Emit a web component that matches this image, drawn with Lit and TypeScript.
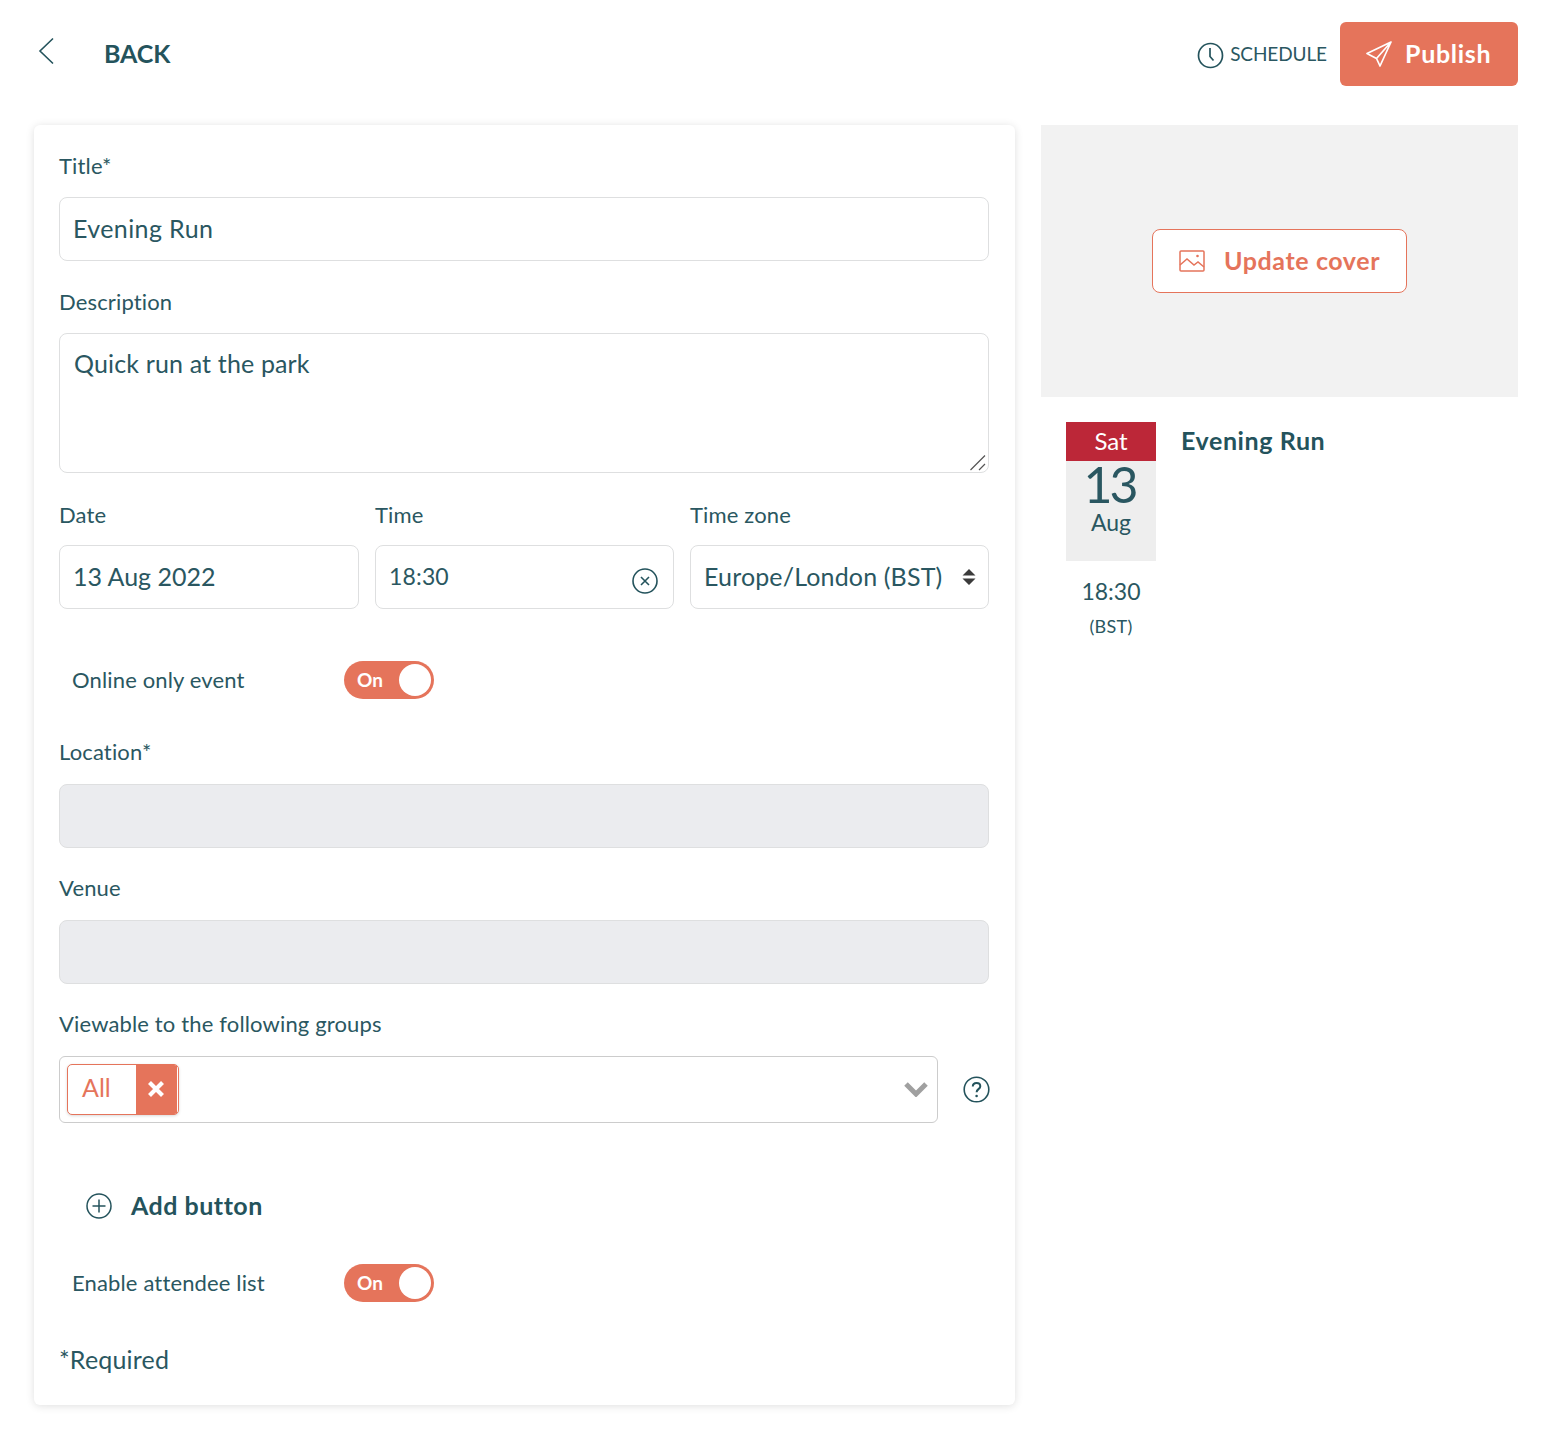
import { LitElement, html, css } from 'lit';
import { customElement } from 'lit/decorators.js';

@customElement('app-root')
export class AppRoot extends LitElement {
  static styles = css`
    :host {
      display: block;
      font-family: 'Lato', 'Open Sans', sans-serif;
      color: #2a5761;
      background: #fff;
      height: 1448px;
      box-sizing: border-box;
      padding: 22px 30px 0 34px;
    }
    * { box-sizing: border-box; }
    svg { display: block; flex: none; }

    .header {
      display: flex;
      align-items: center;
      height: 64px;
      margin-bottom: 39px;
    }
    .back-icon { margin-left: 4px; margin-top: -7px; }
    .back {
      margin-left: 50px;
      padding-bottom: 2px;
      font-size: 25px;
      font-weight: 700;
      color: #24535c;
      letter-spacing: -0.1px;
    }
    .spacer { flex: 1; }
    .schedule {
      display: flex;
      align-items: center;
      gap: 6px;
      font-size: 19px;
      letter-spacing: -0.1px;
      margin-right: 13px;
    }
    .schedule svg { margin-top: 2px; }
    .schedule span, .publish span { padding-bottom: 2px; }
    .publish {
      display: flex;
      align-items: center;
      gap: 13px;
      width: 178px;
      height: 64px;
      padding-left: 26px;
      background: #e5745b;
      color: #fff;
      border-radius: 6px;
      font-size: 25px;
      font-weight: 700;
      letter-spacing: 0.7px;
    }

    .columns { display: flex; gap: 26px; align-items: flex-start; }

    .card {
      width: 981px;
      height: 1280px;
      padding: 26px 26px 0 25px;
      border-radius: 6px;
      box-shadow: 0 1px 8px rgba(0, 0, 0, 0.13);
      background: #fff;
    }
    label {
      display: block;
      font-size: 22px;
      line-height: 30px;
      letter-spacing: 0.15px;
      margin-bottom: 16px;
    }
    input, textarea, .field {
      display: block;
      width: 100%;
      font: inherit;
      color: inherit;
      font-size: 25px;
      letter-spacing: 0.15px;
      border: 1px solid #dedfe0;
      border-radius: 8px;
      background: #fff;
      outline: none;
      padding: 0 13px;
    }
    input, .field { height: 64px; padding-bottom: 2px; }
    .title-input { letter-spacing: 0.4px; }
    .date-input { letter-spacing: 0; }
    .area { position: relative; height: 140px; }
    textarea {
      height: 140px;
      padding: 14px 14px;
      line-height: 30px;
      resize: none;
    }
    .grip { position: absolute; right: 3px; bottom: 2px; }
    input[disabled] { background: #ebecef; padding: 0; }
    .group { margin-bottom: 26px; }
    .group.tall { margin-bottom: 27px; }
    .lower label { line-height: 28px; margin-bottom: 18px; }

    .row {
      display: grid;
      grid-template-columns: 300px 299px 299px;
      gap: 16px;
      margin-bottom: 52px;
    }
    .row label { line-height: 29px; margin-bottom: 16px; }
    .field { display: flex; align-items: center; justify-content: space-between; }
    .tz { padding-right: 12px; }
    .tz svg { margin-top: 2px; }
    .time { padding-right: 15px; }
    .time svg { margin-top: 10px; }
    .digits { font-size: 23px; }

    .toggle-row {
      display: flex;
      align-items: center;
      height: 38px;
      padding-left: 13px;
      font-size: 22px;
      letter-spacing: 0.15px;
    }
    .toggle-row span.text { width: 272px; padding-bottom: 1px; }
    .online { margin-bottom: 39px; }
    .toggle {
      position: relative;
      width: 90px;
      height: 38px;
      border-radius: 19px;
      background: #e5745b;
      color: #fff;
      font-size: 19px;
      font-weight: 700;
      line-height: 38px;
      padding-left: 13px;
    }
    .knob {
      position: absolute;
      top: 3px;
      right: 3px;
      width: 32px;
      height: 32px;
      border-radius: 50%;
      background: #fff;
    }

    .groups { display: flex; align-items: center; justify-content: space-between; margin-right: -1px; }
    .multi {
      display: flex;
      align-items: center;
      justify-content: space-between;
      width: 879px;
      height: 67px;
      padding: 0 9px 0 7px;
      border: 1px solid #cccccc;
      border-radius: 6px;
    }
    .multi > svg { margin-top: -2px; }
    .tag {
      display: flex;
      width: 112px;
      height: 51px;
      margin-top: -1px;
      padding-right: 1px;
      background: #fff;
      border: 1px solid #e5745b;
      border-radius: 5px;
      overflow: hidden;
      box-shadow: 0 1px 3px rgba(0, 0, 0, 0.15);
    }
    .tag span {
      flex: 1;
      padding-left: 14px;
      font-size: 25px;
      line-height: 44px;
      color: #e5745b;
    }
    .tag div {
      display: flex;
      align-items: center;
      justify-content: center;
      width: 41px;
      padding: 0 1px 1px 0;
      background: #e5745b;
    }
    .multi-wrap { margin-bottom: 64px; }

    .add {
      display: flex;
      align-items: center;
      gap: 18px;
      height: 38px;
      padding-left: 27px;
      margin-bottom: 39px;
      font-size: 25px;
      font-weight: 700;
      color: #24535c;
      letter-spacing: 0.5px;
    }
    .add span { margin-top: -2px; margin-left: 1px; }
    .attend { margin-bottom: 41px; }
    .required { font-size: 25px; line-height: 32px; letter-spacing: 0.2px; }

    .side { width: 477px; }
    .cover {
      display: flex;
      align-items: center;
      justify-content: center;
      height: 272px;
      background: #f2f2f2;
      margin-bottom: 25px;
    }
    .update {
      display: flex;
      align-items: center;
      gap: 19px;
      width: 255px;
      height: 64px;
      padding-left: 26px;
      background: #fff;
      color: #e5745b;
      border: 1px solid #e5745b;
      border-radius: 8px;
      font-size: 25px;
      font-weight: 700;
      letter-spacing: 0.6px;
    }
    .update span { padding-bottom: 2px; }
    .event { display: flex; padding-left: 25px; gap: 25px; }
    .date { width: 90px; text-align: center; }
    .sheet { height: 139px; background: #eeeeee; }
    .dow {
      height: 39px;
      line-height: 37px;
      background: #bc2738;
      color: #fff;
      font-size: 24px;
    }
    .day {
      font-size: 50px;
      line-height: 46px;
      letter-spacing: -3px;
      padding-right: 3px;
    }
    .mon { font-size: 23px; line-height: 26px; margin-top: 2px; }
    .t { font-size: 23px; line-height: 30px; margin-top: 15px; }
    .zone { font-size: 18px; line-height: 24px; margin-top: 8px; letter-spacing: 0.3px; }
    .name { font-size: 25px; font-weight: 700; color: #24535c; line-height: 36px; letter-spacing: 0.6px; }
  `;

  render() {
    return html`
      <div class="header">
        <svg class="back-icon" width="16" height="28" viewBox="0 0 16 28" fill="none" stroke="#24535c" stroke-width="1.6">
          <path d="M15 1.5 2 14l13 12.5" />
        </svg>
        <div class="back">BACK</div>
        <div class="spacer"></div>
        <div class="schedule">
          <svg width="27" height="27" viewBox="0 0 27 27" fill="none" stroke="#24535c" stroke-width="1.7">
            <circle cx="13.5" cy="13.5" r="12" />
            <path d="M13 6v8.5l3.5 4" />
          </svg>
          <span>SCHEDULE</span>
        </div>
        <div class="publish">
          <svg width="26" height="26" viewBox="0 0 26 26" fill="none" stroke="#fff" stroke-width="1.7" stroke-linejoin="round">
            <path d="M25 1 1 12.5l9.500 5L14 25 25 1ZM25 1 10.500 17.500" />
          </svg>
          <span>Publish</span>
        </div>
      </div>

      <div class="columns">
        <div class="card">
          <div class="group">
            <label>Title*</label>
            <input class="title-input" .value=${'Evening Run'} />
          </div>
          <div class="group tall">
            <label>Description</label>
            <div class="area">
              <textarea .value=${'Quick run at the park'}></textarea>
              <svg class="grip" width="16" height="16" viewBox="0 0 16 16" fill="none" stroke="#555" stroke-width="1.200">
                <path d="M0.500 15 15 0.500M9 15l6-6" />
              </svg>
            </div>
          </div>
          <div class="row">
            <div>
              <label>Date</label>
              <input class="date-input" .value=${'13 Aug 2022'} />
            </div>
            <div>
              <label>Time</label>
              <div class="field time">
                <span class="digits">18:30</span>
                <svg width="26" height="26" viewBox="0 0 26 26" fill="none" stroke="#24535c" stroke-width="1.6">
                  <circle cx="13" cy="13" r="12" />
                  <path d="m9 9 8 8m0-8-8 8" />
                </svg>
              </div>
            </div>
            <div>
              <label>Time zone</label>
              <div class="field tz">
                Europe/London (BST)
                <svg width="14" height="16" viewBox="0 0 14 16" fill="#3b3b3b">
                  <path d="M7 0l6.500 6.500H.5zM7 16 .5 9.500h13z" />
                </svg>
              </div>
            </div>
          </div>

          <div class="toggle-row online">
            <span class="text">Online only event</span>
            <div class="toggle">On<div class="knob"></div></div>
          </div>

          <div class="group lower">
            <label>Location*</label>
            <input disabled />
          </div>
          <div class="group lower">
            <label>Venue</label>
            <input disabled />
          </div>

          <div class="multi-wrap lower">
            <label>Viewable to the following groups</label>
            <div class="groups">
              <div class="multi">
                <div class="tag">
                  <span>All</span>
                  <div>
                    <svg width="18" height="18" viewBox="0 0 18 18" stroke="#fff" stroke-width="4.200">
                      <path d="m2.500 2.500 13 13m0-13-13 13" />
                    </svg>
                  </div>
                </div>
                <svg width="24" height="16" viewBox="0 0 24 16" fill="none" stroke="#a0a0a0" stroke-width="5">
                  <path d="m2 3 10 10L22 3" />
                </svg>
              </div>
              <svg width="27" height="27" viewBox="0 0 27 27" fill="none" stroke="#24535c" stroke-width="1.600">
                <circle cx="13.500" cy="13.500" r="12.300" />
                <path d="M9.800 10.500c0-2.300 1.700-3.600 3.800-3.600s3.700 1.300 3.700 3.300c0 3-3.700 2.900-3.700 6" stroke-width="2" />
                <circle cx="13.600" cy="20" r="1.300" fill="#24535c" stroke="none" />
              </svg>
            </div>
          </div>

          <div class="add">
            <svg width="26" height="26" viewBox="0 0 26 26" fill="none" stroke="#24535c" stroke-width="1.500">
              <circle cx="13" cy="13" r="12" />
              <path d="M13 6.500v13M6.500 13h13" />
            </svg>
            <span>Add button</span>
          </div>

          <div class="toggle-row attend">
            <span class="text">Enable attendee list</span>
            <div class="toggle">On<div class="knob"></div></div>
          </div>

          <div class="required">*Required</div>
        </div>

        <div class="side">
          <div class="cover">
            <div class="update">
              <svg width="26" height="22" viewBox="0 0 26 22" fill="none" stroke="#e5745b" stroke-width="1.500">
                <rect x="1" y="1" width="24" height="20" rx="1" />
                <path d="m1 15 7-6 7 6 4-3 6 5" />
                <circle cx="18.500" cy="6" r="1.300" fill="#e5745b" stroke="none" />
              </svg>
              <span>Update cover</span>
            </div>
          </div>
          <div class="event">
            <div class="date">
              <div class="sheet">
                <div class="dow">Sat</div>
                <div class="day">13</div>
                <div class="mon">Aug</div>
              </div>
              <div class="t">18:30</div>
              <div class="zone">(BST)</div>
            </div>
            <div class="name">Evening Run</div>
          </div>
        </div>
      </div>
    `;
  }
}
